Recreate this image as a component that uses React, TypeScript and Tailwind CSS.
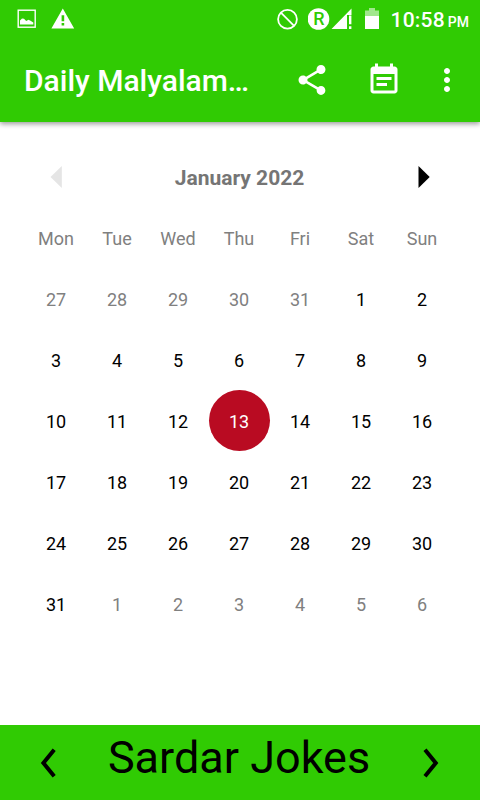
import clsx from 'clsx';

const WEEKDAYS = ['Mon', 'Tue', 'Wed', 'Thu', 'Fri', 'Sat', 'Sun'];

const LEADING_DAYS = [27, 28, 29, 30, 31];
const MONTH_DAYS = Array.from({ length: 31 }, (_, i) => i + 1);
const TRAILING_DAYS = [1, 2, 3, 4, 5, 6];
const SELECTED_DAY = 13;

const DAYS = [
  ...LEADING_DAYS.map((day) => ({ day, current: false })),
  ...MONTH_DAYS.map((day) => ({ day, current: true })),
  ...TRAILING_DAYS.map((day) => ({ day, current: false })),
];

function StatusBar() {
  return (
    <div className="flex h-[38px] items-center pl-[17px] pr-[11px] text-white">
      <svg width="20" height="20" viewBox="0 0 20 20">
        <rect x="1.2" y="1.2" width="17" height="17" fill="none" stroke="currentColor" strokeWidth="1.4" />
        <path d="M3 15.5V11.5l2-2 2 .2 2.2 2.3 2.3-1.2 2 1 2.8 1.7v2z" fill="currentColor" />
      </svg>
      <svg width="24" height="22" viewBox="0 0 24 22" className="ml-[14px]">
        <path
          fillRule="evenodd"
          d="M11.8 0.4L23.2 20.4H0.4zM10.6 7.3v6h2.6v-6zM10.6 14.9v2.5h2.6v-2.5z"
          fill="currentColor"
        />
      </svg>

      <div className="ml-auto flex items-center">
        <svg width="22" height="22" viewBox="0 0 22 22" fill="none" stroke="currentColor" strokeWidth="1.8">
          <circle cx="10.5" cy="11.3" r="9.4" />
          <path d="M3.9 4.7l13.2 13.2" />
        </svg>
        <svg width="22" height="22" viewBox="0 0 22 22" className="ml-[9px]">
          <circle cx="10.5" cy="11" r="10.8" fill="#fff" />
          <text
            x="10.8"
            y="17.3"
            textAnchor="middle"
            fill="#30cb03"
            className="font-['Roboto',sans-serif] text-[18px] font-medium"
          >
            R
          </text>
        </svg>
        {/* signal strength with a "no data" mark in the corner */}
        <svg width="22" height="22" viewBox="0 0 22 22" className="ml-px">
          <path d="M0.5 21L20.5 0.5V7H16v14z" fill="currentColor" />
          <path d="M19.2 7.5v8.7M19.2 18.3V21" stroke="currentColor" strokeWidth="2.4" />
        </svg>
        <svg width="15" height="22" viewBox="0 0 15 22" className="ml-[12px]">
          <path d="M4 0h6v2.5h4V8H0V2.5h4z" fill="currentColor" opacity="0.55" />
          <path d="M0 8h14v13H0z" fill="currentColor" />
        </svg>
        <div className="ml-[11px] flex items-baseline gap-[3px] pt-0.5 font-medium">
          <span className="text-[21px] leading-[38px] tracking-[0.2px]">10:58</span>
          <span className="text-sm">PM</span>
        </div>
      </div>
    </div>
  );
}

function Toolbar() {
  return (
    <div className="flex h-[84px] items-center pl-6 pr-[15px] text-white">
      <h1 className="pt-0.5 text-[30px] font-medium leading-[84px]">Daily Malyalam…</h1>
      <div className="ml-auto flex gap-9">
        <button aria-label="Share">
          <svg width="36" height="36" viewBox="0 0 24 24" fill="currentColor">
            <path d="M18 16.08c-.76 0-1.44.3-1.96.77L8.91 12.7c.05-.23.09-.46.09-.7s-.04-.47-.09-.7l7.05-4.11c.54.5 1.25.81 2.04.81 1.66 0 3-1.34 3-3s-1.34-3-3-3-3 1.34-3 3c0 .24.04.47.09.7L8.04 9.81C7.5 9.31 6.79 9 6 9c-1.66 0-3 1.34-3 3s1.34 3 3 3c.79 0 1.5-.31 2.04-.81l7.12 4.16c-.05.21-.08.43-.08.65 0 1.61 1.31 2.92 2.92 2.92s2.92-1.31 2.92-2.92-1.31-2.92-2.92-2.92z" />
          </svg>
        </button>
        <button aria-label="Events">
          <svg width="36" height="36" viewBox="0 0 24 24" fill="currentColor">
            <path d="M17 10H7v2h10v-2zm2-7h-1V1h-2v2H8V1H6v2H5c-1.11 0-1.99.9-1.99 2L3 19c0 1.1.89 2 2 2h14c1.1 0 2-.9 2-2V5c0-1.1-.9-2-2-2zm0 16H5V8h14v11zm-5-5H7v2h7v-2z" />
          </svg>
        </button>
        <button aria-label="More options" className="-ml-[9px]">
          <svg width="36" height="36" viewBox="0 0 24 24" fill="currentColor">
            <path d="M12 8c1.1 0 2-.9 2-2s-.9-2-2-2-2 .9-2 2 .9 2 2 2zm0 2c-1.1 0-2 .9-2 2s.9 2 2 2 2-.9 2-2-.9-2-2-2zm0 6c-1.1 0-2 .9-2 2s.9 2 2 2 2-.9 2-2-.9-2-2-2z" />
          </svg>
        </button>
      </div>
    </div>
  );
}

function Calendar() {
  return (
    <section className="pl-[26px] pt-6">
      <div className="flex h-[61px] w-[427px] items-center justify-between pl-[24px] pr-[23px]">
        <button aria-label="Previous month">
          <svg width="12" height="22" viewBox="0 0 12 22" fill="#e5e5e5">
            <path d="M11.8 0v22L0.5 11z" />
          </svg>
        </button>
        <h2 className="pr-px pt-0.5 text-[21px] font-bold leading-7 text-[#757575]">January 2022</h2>
        <button aria-label="Next month">
          <svg width="12" height="22" viewBox="0 0 12 22" fill="#000">
            <path d="M0.5 0v22L11.7 11z" />
          </svg>
        </button>
      </div>

      <div className="grid w-[427px] grid-cols-7 text-center text-lg leading-[63px]">
        {WEEKDAYS.map((name) => (
          <div key={name} className="h-[61px] pr-px text-[#808080]">
            {name}
          </div>
        ))}
        {DAYS.map(({ day, current }) => (
          <div
            key={`${current}-${day}`}
            className={clsx(
              'h-[61px] rounded-full pr-px',
              !current && 'text-[#808080]',
              current && day === SELECTED_DAY && 'bg-[#b90b22] text-white',
              current && day !== SELECTED_DAY && 'text-black'
            )}
          >
            {day}
          </div>
        ))}
      </div>
    </section>
  );
}

function Footer() {
  return (
    <footer className="mt-auto flex h-[75px] items-center justify-between bg-[#30cb03] pl-[39px] pr-[40px] text-black">
      <button aria-label="Previous">
        <svg width="18" height="32" viewBox="0 0 18 32" fill="none" stroke="currentColor" strokeWidth="4">
          <path d="M15.2 2.8L4.4 16l10.8 13.2" />
        </svg>
      </button>
      <span className="-mt-[10px] pr-px text-[45px] leading-[54px]">Sardar Jokes</span>
      <button aria-label="Next">
        <svg width="18" height="32" viewBox="0 0 18 32" fill="none" stroke="currentColor" strokeWidth="4">
          <path d="M3 2.8L13.8 16 3 29.2" />
        </svg>
      </button>
    </footer>
  );
}

export default function App() {
  return (
    <div className="flex h-[800px] w-[480px] flex-col bg-white font-['Roboto',sans-serif]">
      <header className="bg-[#30cb03] shadow-[0_2px_5px_rgba(0,0,0,0.4)]">
        <StatusBar />
        <Toolbar />
      </header>
      <Calendar />
      <Footer />
    </div>
  );
}
